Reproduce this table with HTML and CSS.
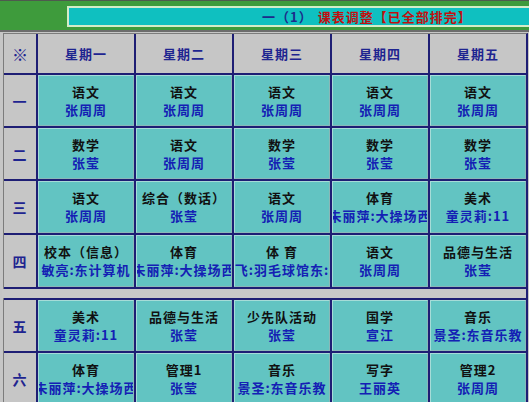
FILE: index.html
```html
<!DOCTYPE html>
<html lang="zh-CN">
<head>
<meta charset="utf-8">
<link rel="stylesheet" href="styles.css">
</head>
<body>
<div class="titlebar">
  <div class="titlebox"><span class="cls">一（1）</span><span class="ttl">课表调整【已全部排完】</span></div>
</div>
<div class="page">
  <div class="sched">
    <div class="hd mark">※</div>
    <div class="hd">星期一</div>
    <div class="hd">星期二</div>
    <div class="hd">星期三</div>
    <div class="hd">星期四</div>
    <div class="hd">星期五</div>

    <div class="day">一</div>
    <div class="c"><span class="s">语文</span><span class="t">张周周</span></div>
    <div class="c"><span class="s">语文</span><span class="t">张周周</span></div>
    <div class="c"><span class="s">语文</span><span class="t">张周周</span></div>
    <div class="c"><span class="s">语文</span><span class="t">张周周</span></div>
    <div class="c"><span class="s">语文</span><span class="t">张周周</span></div>

    <div class="day">二</div>
    <div class="c"><span class="s">数学</span><span class="t">张莹</span></div>
    <div class="c"><span class="s">语文</span><span class="t">张周周</span></div>
    <div class="c"><span class="s">数学</span><span class="t">张莹</span></div>
    <div class="c"><span class="s">数学</span><span class="t">张莹</span></div>
    <div class="c"><span class="s">数学</span><span class="t">张莹</span></div>

    <div class="day">三</div>
    <div class="c"><span class="s">语文</span><span class="t">张周周</span></div>
    <div class="c"><span class="s">综合（数话）</span><span class="t">张莹</span></div>
    <div class="c"><span class="s">语文</span><span class="t">张周周</span></div>
    <div class="c"><span class="s">体育</span><span class="t">朱丽萍:大操场西</span></div>
    <div class="c"><span class="s">美术</span><span class="t">童灵莉:11</span></div>

    <div class="day">四</div>
    <div class="c"><span class="s">校本（信息）</span><span class="t">敏亮:东计算机</span></div>
    <div class="c"><span class="s">体育</span><span class="t">朱丽萍:大操场西</span></div>
    <div class="c"><span class="s">体 育</span><span class="t">飞:羽毛球馆东:</span></div>
    <div class="c"><span class="s">语文</span><span class="t">张周周</span></div>
    <div class="c"><span class="s">品德与生活</span><span class="t">张莹</span></div>

    <div class="gap"></div>

    <div class="day">五</div>
    <div class="c"><span class="s">美术</span><span class="t">童灵莉:11</span></div>
    <div class="c"><span class="s">品德与生活</span><span class="t">张莹</span></div>
    <div class="c"><span class="s">少先队活动</span><span class="t">张莹</span></div>
    <div class="c"><span class="s">国学</span><span class="t">宣江</span></div>
    <div class="c"><span class="s">音乐</span><span class="t">景圣:东音乐教</span></div>

    <div class="day">六</div>
    <div class="c"><span class="s">体育</span><span class="t">朱丽萍:大操场西</span></div>
    <div class="c"><span class="s">管理1</span><span class="t">张莹</span></div>
    <div class="c"><span class="s">音乐</span><span class="t">景圣:东音乐教</span></div>
    <div class="c"><span class="s">写字</span><span class="t">王丽英</span></div>
    <div class="c"><span class="s">管理2</span><span class="t">张周周</span></div>
  </div>
</div>
</body>
</html>
```
FILE: styles.css
```css
html, body {
  margin: 0;
  padding: 0;
  background: #c6c6c6;
  overflow: hidden;
  font-family: "Noto Sans CJK SC", "Noto Sans", sans-serif;
  font-weight: bold;
  font-size: 13px;
}

.titlebar {
  height: 24px;
  background: #3e9b3c;
  border-top: 1px solid #4e5a4e;
  border-bottom: 2px solid #6c6c6c;
  padding-top: 5px;
  padding-left: 67px;
}

.titlebox {
  height: 17px;
  background: #0fc0c0;
  border: 2px solid #d4ecc8;
  border-right: none;
  padding-left: 193px;
  line-height: 17px;
  white-space: nowrap;
  letter-spacing: 1px;
}

.cls { color: #1c2c8a; margin-right: 5px; }
.ttl { color: #c01010; }

.page {
  padding: 1px 0 0 3px;
}

.sched {
  display: grid;
  grid-template-columns: 32px repeat(5, 96px);
  grid-template-rows: 39px 51px 51px 52px 52px 9px 51px 51px;
  gap: 2px;
  width: max-content;
  background: #1e1e74;
  border-top: 1px solid #7c7c7c;
  border-left: 1px solid #7c7c7c;
  border-right: 2px solid #1e1e74;
  letter-spacing: 1px;
}

.hd, .day {
  background: #c6c6c6;
  color: #1e2490;
  display: flex;
  align-items: center;
  justify-content: center;
}

.mark { font-size: 16px; letter-spacing: 0; }
.day { font-size: 14px; }

.gap {
  grid-column: 1 / -1;
  background: #c8c8c8;
  margin-left: -2px;
}

.c {
  background: #62c4c2;
  border: 1px solid #a6dcd8;
  border-right-color: #8ab8b8;
  border-bottom-color: #8ab8b8;
  display: flex;
  flex-direction: column;
  align-items: center;
  justify-content: center;
  overflow: hidden;
  white-space: nowrap;
  line-height: 18px;
}

.s { color: #111; }
.t { color: #1420b4; }
```
